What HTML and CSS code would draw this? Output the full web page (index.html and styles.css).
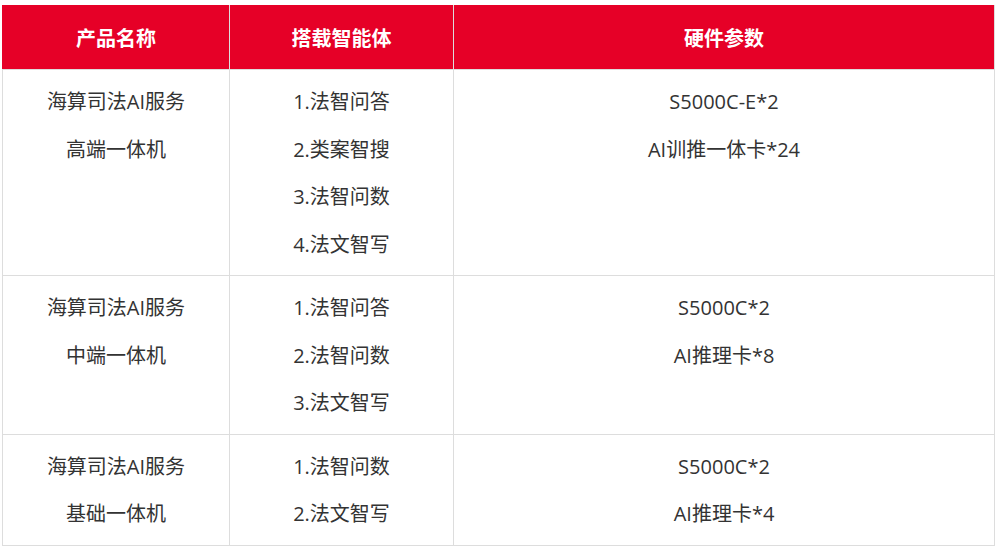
FILE: index.html
```html
<!DOCTYPE html>
<html lang="zh-CN">
<head>
<meta charset="utf-8">
<link rel="stylesheet" href="styles.css">
</head>
<body>
<table class="spec">
  <colgroup>
    <col class="c1"><col class="c2"><col class="c3">
  </colgroup>
  <thead>
    <tr><th>产品名称</th><th>搭载智能体</th><th>硬件参数</th></tr>
  </thead>
  <tbody>
    <tr>
      <td><p>海算司法AI服务</p><p>高端一体机</p></td>
      <td><p>1.法智问答</p><p>2.类案智搜</p><p>3.法智问数</p><p>4.法文智写</p></td>
      <td><p>S5000C-E*2</p><p>AI训推一体卡*24</p></td>
    </tr>
    <tr>
      <td><p>海算司法AI服务</p><p>中端一体机</p></td>
      <td><p>1.法智问答</p><p>2.法智问数</p><p>3.法文智写</p></td>
      <td><p>S5000C*2</p><p>AI推理卡*8</p></td>
    </tr>
    <tr>
      <td><p>海算司法AI服务</p><p>基础一体机</p></td>
      <td><p>1.法智问数</p><p>2.法文智写</p></td>
      <td><p>S5000C*2</p><p>AI推理卡*4</p></td>
    </tr>
  </tbody>
</table>
</body>
</html>
```
FILE: styles.css
```css
html, body {
  margin: 0;
  padding: 0;
  background: #fff;
}
body {
  padding: 5px 0 0 2px;
  font-family: "Open Sans", "Noto Sans CJK SC", sans-serif;
  color: #333;
}
.spec {
  border-collapse: collapse;
  width: 992px;
  table-layout: fixed;
}
.c1 { width: 227px; }
.c2 { width: 224px; }
.c3 { width: 541px; }
.spec th, .spec td {
  border: 1px solid #ddd;
  text-align: center;
  vertical-align: top;
  padding: 8px 0 7px;
  font-size: 20px;
  line-height: 47.5px;
}
.spec th {
  background: #e60027;
  color: #fff;
  font-weight: bold;
  font-family: "Noto Sans CJK SC", sans-serif;
  line-height: 48px;
  border-top-color: #e60027;
  border-left-color: #e60027;
}
.spec th + th {
  border-left-color: #f0c8cc;
}
.spec td p {
  margin: 0;
}
```
